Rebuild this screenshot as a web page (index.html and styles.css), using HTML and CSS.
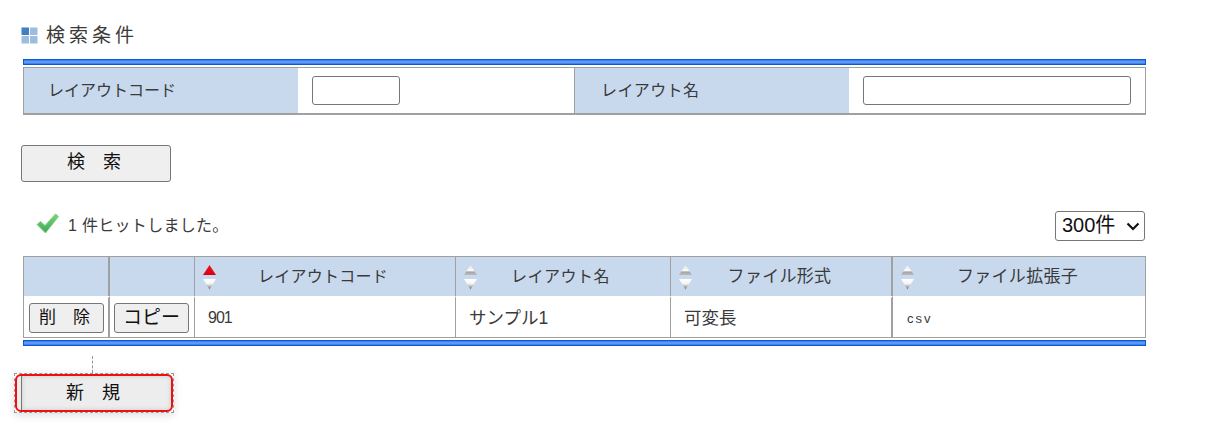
FILE: index.html
```html
<!DOCTYPE html>
<html lang="ja">
<head>
<meta charset="utf-8">
<title>検索条件</title>
<link rel="stylesheet" href="styles.css">
</head>
<body>
<svg class="defs" width="0" height="0" aria-hidden="true">
  <defs>
    <linearGradient id="up" x1="0" y1="0" x2="0" y2="1"><stop offset="0" stop-color="#e4e4e4"/><stop offset="0.55" stop-color="#fafafa"/><stop offset="0.7" stop-color="#a4a4a4"/><stop offset="1" stop-color="#bcbcbc"/></linearGradient>
    <linearGradient id="upred" x1="0" y1="0" x2="0" y2="1"><stop offset="0" stop-color="#f01020"/><stop offset="1" stop-color="#d80010"/></linearGradient>
    <linearGradient id="down" x1="0" y1="0" x2="0" y2="1"><stop offset="0" stop-color="#ffffff"/><stop offset="0.45" stop-color="#f4f4f4"/><stop offset="1" stop-color="#6f6f6f"/></linearGradient>
    <linearGradient id="chk" x1="0" y1="0" x2="0" y2="1"><stop offset="0" stop-color="#78d878"/><stop offset="1" stop-color="#3fa653"/></linearGradient>
    <symbol id="sort-off" viewBox="0 0 15 26"><path d="M7.5 1 L14 11 H1 Z" fill="url(#up)"/><path d="M1 15 H14 L7.5 25.5 Z" fill="url(#down)"/></symbol>
    <symbol id="sort-asc" viewBox="0 0 15 26"><path d="M7.5 1 L14 11 H1 Z" fill="url(#upred)"/><path d="M1 15 H14 L7.5 25.5 Z" fill="url(#down)"/></symbol>
  </defs>
</svg>
<main class="page">
  <h2 class="heading">
    <svg class="heading-icon" width="17" height="17" viewBox="0 0 17 17"><rect x="0.5" y="0.5" width="7.5" height="7.5" fill="#3f7fc4"/><rect x="9" y="0.5" width="7.5" height="7.5" fill="#9dbde0"/><rect x="0.5" y="9" width="7.5" height="7.5" fill="#9dbde0"/><rect x="9" y="9" width="7.5" height="7.5" fill="#9dbde0"/></svg>
    <span>検索条件</span>
  </h2>

  <div class="blue-bar search-bar"></div>
  <table class="search-table">
    <colgroup><col class="s1"><col class="s2"><col class="s3"><col class="s4"></colgroup>
    <tr>
      <th class="first">レイアウトコード</th>
      <td><input class="input input-code" type="text"></td>
      <th class="divided">レイアウト名</th>
      <td><input class="input input-name" type="text"></td>
    </tr>
  </table>

  <button class="btn btn-wide search-btn" type="button">検　索</button>

  <div class="result-row">
    <p class="message">
      <svg class="check" width="23" height="21" viewBox="0 0 23 21"><path d="M1 11.5 L4.5 8.5 L9 12.5 L19.5 1 L22.5 3.5 L9.5 20 Z" fill="url(#chk)" stroke="#86d086" stroke-width="1" stroke-linejoin="round"/></svg>
      <span>1 件ヒットしました。</span>
    </p>
    <div class="select-wrap">
      <select class="page-size"><option>300件</option></select>
      <svg class="select-arrow" width="14" height="9" viewBox="0 0 14 9"><path d="M1.5 1.5 L7 7 L12.5 1.5" fill="none" stroke="#111" stroke-width="2.2"/></svg>
    </div>
  </div>

  <table class="list-table">
    <colgroup><col class="c1"><col class="c2"><col class="c3"><col class="c4"><col class="c5"><col class="c6"></colgroup>
    <thead>
      <tr>
        <th class="thick-r"></th>
        <th></th>
        <th><div class="sort-head"><svg class="sort" width="15" height="26"><use href="#sort-asc"/></svg><span>レイアウトコード</span></div></th>
        <th><div class="sort-head"><svg class="sort" width="15" height="26"><use href="#sort-off"/></svg><span class="name">レイアウト名</span></div></th>
        <th class="thick-r"><div class="sort-head"><svg class="sort" width="15" height="26"><use href="#sort-off"/></svg><span class="wide">ファイル形式</span></div></th>
        <th><div class="sort-head"><svg class="sort" width="15" height="26"><use href="#sort-off"/></svg><span class="wide">ファイル拡張子</span></div></th>
      </tr>
    </thead>
    <tbody>
      <tr>
        <td class="thick-r action"><button class="btn btn-small btn-delete" type="button">削　除</button></td>
        <td class="action"><button class="btn btn-small btn-copy" type="button">コピー</button></td>
        <td class="code">901</td>
        <td><span class="cell-text">サンプル1</span></td>
        <td class="thick-r"><span class="cell-text">可変長</span></td>
        <td class="ext">csv</td>
      </tr>
    </tbody>
  </table>
  <div class="blue-bar list-bar"></div>

  <div class="connector"></div>
  <div class="selection">
    <div class="selection-ring">
      <button class="btn btn-wide new-btn" type="button">新　規</button>
    </div>
  </div>
</main>
</body>
</html>
```
FILE: styles.css
```css
* { box-sizing: border-box; }
html, body { margin: 0; padding: 0; background: #fff; }
body {
  font-family: "Liberation Sans", "Noto Sans CJK JP", sans-serif;
  color: #3a3a3a;
  font-size: 16px;
}
.defs { display: block; height: 0; }
.page { width: 1205px; height: 434px; overflow: hidden; padding: 24px 0 0 0; }

.heading {
  display: flex;
  align-items: center;
  gap: 8px;
  margin: 0 0 0 21px;
  height: 22px;
  font-size: 19px;
  font-weight: 400;
  letter-spacing: 4px;
  line-height: 22px;
}
.heading span { padding-top: 2px; }
.heading-icon { flex: none; }

.blue-bar {
  width: 1123px;
  height: 6px;
  margin-left: 23px;
  border: 1px solid #0a58d8;
  background: linear-gradient(#2f78ee, #6ea3f7 50%, #2f78ee);
}
.search-bar { margin-top: 13px; }

table { border-collapse: separate; border-spacing: 0; table-layout: fixed; }

.search-table {
  width: 1123px;
  margin: 2px 0 0 23px;
  height: 48px;
  border: solid #a0a0a0;
  border-width: 1px 1px 2px 1px;
}
.s1 { width: 274px; }
.s2 { width: 276px; }
.s3 { width: 275px; }
.s4 { width: 296px; }
.search-table th {
  background: #c8d9ee;
  font-weight: 400;
  text-align: left;
  padding: 0 0 4px 26px;
  font-size: 16px;
  letter-spacing: 0.4px;
  color: #3a3a3a;
}
.search-table th.first { padding-left: 24px; letter-spacing: 0; }
.search-table th.divided { border-left: 1px solid #a0a0a0; }
.search-table td { padding: 0 0 0 14px; }

.input {
  display: block;
  height: 29px;
  border: 1px solid #767676;
  border-radius: 3px;
  background: #fff;
  padding: 0 2px;
  margin: 0;
}
.input-code { width: 88px; }
.input-name { width: 268px; }

.btn {
  display: block;
  margin: 0;
  background: #efefef;
  border: 1px solid #767676;
  border-radius: 3px;
  font-family: inherit;
  font-size: 18px;
  color: #111;
  line-height: 1;
  padding: 0 4px 4px 0;
}
.btn-wide { width: 150px; height: 37px; }
.search-btn { margin: 30px 0 0 21px; }

.result-row {
  display: flex;
  align-items: center;
  justify-content: space-between;
  width: 1145px;
  height: 30px;
  margin-top: 29px;
  padding-left: 36px;
}
.message {
  display: flex;
  align-items: center;
  gap: 9px;
  margin: -5px 0 0;
  font-size: 16px;
  letter-spacing: 0.3px;
  color: #3a3a3a;
}
.check { flex: none; }
.select-wrap { position: relative; width: 90px; height: 30px; }
.page-size {
  display: block;
  appearance: none;
  width: 90px;
  height: 30px;
  border: 1px solid #767676;
  border-radius: 3px;
  background: #fff;
  font-family: inherit;
  font-size: 20px;
  color: #111;
  padding: 0 0 3px 6px;
  margin: 0;
}
.select-arrow {
  position: absolute;
  right: 5px;
  top: 11px;
  pointer-events: none;
}

.list-table {
  width: 1123px;
  margin: 15px 0 0 23px;
  border: 1px solid #a0a0a0;
}
.c1 { width: 86px; }
.c2 { width: 85px; }
.c3 { width: 261px; }
.c4 { width: 215px; }
.c5 { width: 222px; }
.c6 { width: 252px; }

.list-table th {
  height: 39px;
  background: #c8d9ee;
  font-weight: 400;
  font-size: 16px;
  color: #3a3a3a;
  padding: 0;
  border-right: 1px solid #a0a0a0;
}
.list-table th:last-child, .list-table td:last-child { border-right: 0; }
.list-table td {
  height: 41px;
  padding: 0 0 3px 13px;
  border-top: 2px solid #fff;
  border-right: 1px solid #a0a0a0;
  font-size: 17px;
  color: #3a3a3a;
  background: #fff;
}
.list-table .thick-r { border-right-width: 2px; }
.list-table td.action { padding: 0 0 0 5px; }
.list-table td.action + td.action { padding-left: 4px; }
.list-table td.ext { font-size: 13px; letter-spacing: 2px; padding: 1px 0 0 14px; }
.list-table td.code { font-size: 16px; letter-spacing: -1px; padding-bottom: 0; }
.cell-text { font-size: 17.5px; }

.sort-head {
  display: flex;
  align-items: center;
  padding-left: 7px;
}
.sort { flex: none; }
.sort-head span {
  flex: 1;
  text-align: center;
  padding: 0 26px 4px 0;
  letter-spacing: 0.25px;
}
.sort-head span.name { letter-spacing: 0.5px; padding-right: 27px; }
.sort-head span.wide { font-size: 17px; letter-spacing: 0.3px; padding-right: 25px; }

.btn-small { width: 75px; height: 30px; font-size: 17px; padding: 0 0 1px; }
.btn-delete { padding-right: 4px; }
.btn-copy { font-size: 19px; }

.list-bar { margin-top: 2px; }

.connector {
  width: 0;
  height: 17px;
  margin: 10px 0 0 92px;
  border-left: 1px dashed #999;
}
.selection {
  width: 160px;
  height: 40px;
  margin-left: 14px;
  border: 1px dashed #999;
  background: #fff;
  box-shadow: 0 2px 8px rgba(0,0,0,0.14);
}
.selection-ring {
  height: 100%;
  border: 2px solid #f00e0e;
  border-radius: 6px;
  padding: 0 0 0 4px;
  background: #ededed;
  overflow: hidden;
}
.new-btn {
  width: 100%;
  height: 100%;
  border-width: 0 0 0 1px;
  border-radius: 0;
  background: transparent;
  padding: 0 7px 0 0;
  box-shadow: inset 0 0 5px rgba(0,0,0,0.15);
}
```
